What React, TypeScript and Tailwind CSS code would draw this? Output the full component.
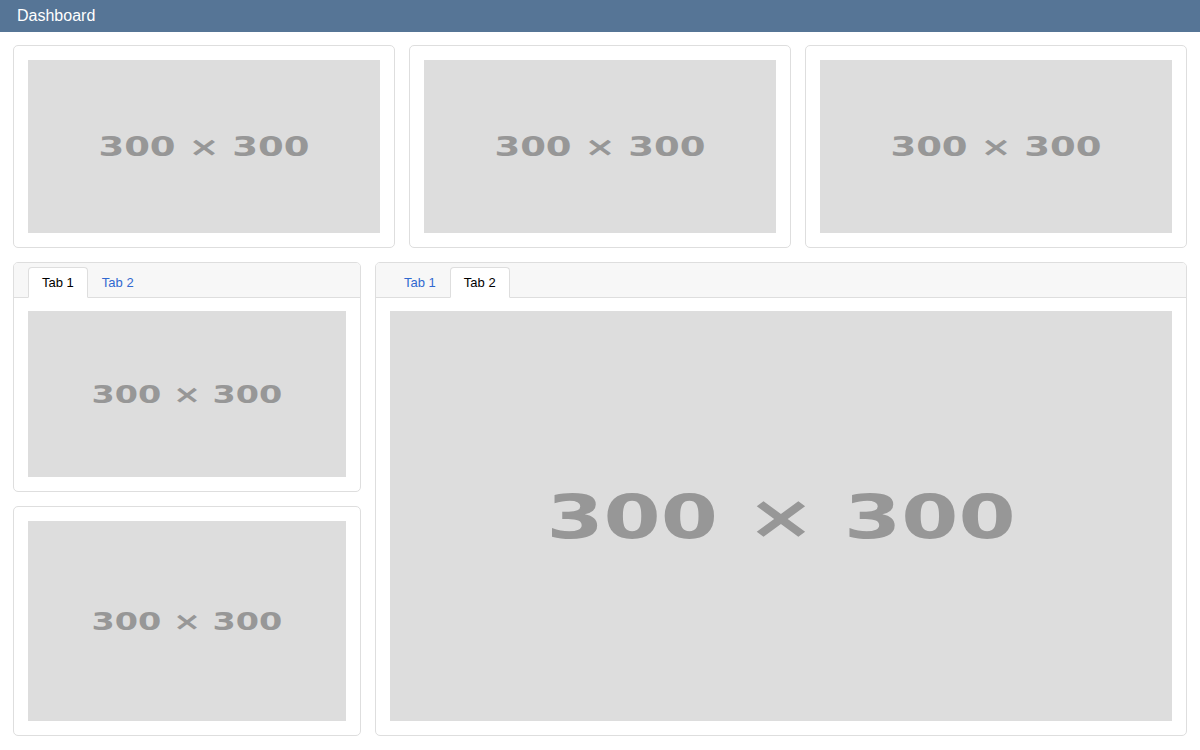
import React, { useState } from 'react';

function Placeholder() {
  return (
    <div className="relative flex-1 min-h-0 bg-[#dddddd] overflow-hidden">
      <svg className="absolute inset-0 w-full h-full" viewBox="0 0 300 300" preserveAspectRatio="xMidYMid slice">
        <text
          x="150"
          y="158.5"
          textAnchor="middle"
          fontFamily="'DejaVu Sans', 'Liberation Sans', sans-serif"
          fontWeight="bold"
          fontSize="23"
          fill="#979797"
          textLength="180"
          lengthAdjust="spacingAndGlyphs"
        >
          300 × 300
        </text>
      </svg>
    </div>
  );
}

function Card({ className = '' }: { className?: string }) {
  return (
    <div className={`bg-white border border-[#dedede] rounded-[5px] p-[14px] flex flex-col min-h-0 ${className}`}>
      <Placeholder />
    </div>
  );
}

function TabCard({ initial, className = '' }: { initial: number; className?: string }) {
  const [active, setActive] = useState(initial);
  return (
    <div className={`bg-white border border-[#dedede] rounded-[5px] flex flex-col overflow-hidden min-h-0 ${className}`}>
      <div className="h-[35px] shrink-0 bg-[#f7f7f7] border-b border-[#dedede] flex items-end pl-[14px]">
        {[1, 2].map((n) => (
          <button
            key={n}
            onClick={() => setActive(n)}
            className={`h-[31px] -mb-px px-[13px] text-[13px] rounded-t-[4px] border ${
              active === n
                ? 'bg-white border-[#dedede] border-b-white text-black'
                : 'border-transparent text-[#3169d0]'
            }`}
          >
            Tab {n}
          </button>
        ))}
      </div>
      <div className="flex-1 px-[14px] pt-[13px] pb-[14px] min-h-0 flex flex-col">
        <Placeholder />
      </div>
    </div>
  );
}

export default function App() {
  return (
    <div className="w-full h-[750px] flex flex-col bg-white font-['Liberation_Sans',Arial,sans-serif]">
      <div className="h-8 shrink-0 bg-[#567596] flex items-center px-[17px]">
        <span className="text-white text-base">Dashboard</span>
      </div>
      <div className="flex-1 min-h-0 flex flex-col gap-[14px] px-[13px] pt-[13px] pb-[14px]">
        <div className="h-[203px] shrink-0 grid grid-cols-3 gap-[14px]">
          <Card />
          <Card />
          <Card />
        </div>
        <div className="flex-1 min-h-0 grid grid-cols-[348px_1fr] gap-[14px]">
          <div className="grid grid-rows-2 gap-[14px] min-h-0">
            <TabCard initial={1} />
            <Card />
          </div>
          <TabCard initial={2} />
        </div>
      </div>
    </div>
  );
}
